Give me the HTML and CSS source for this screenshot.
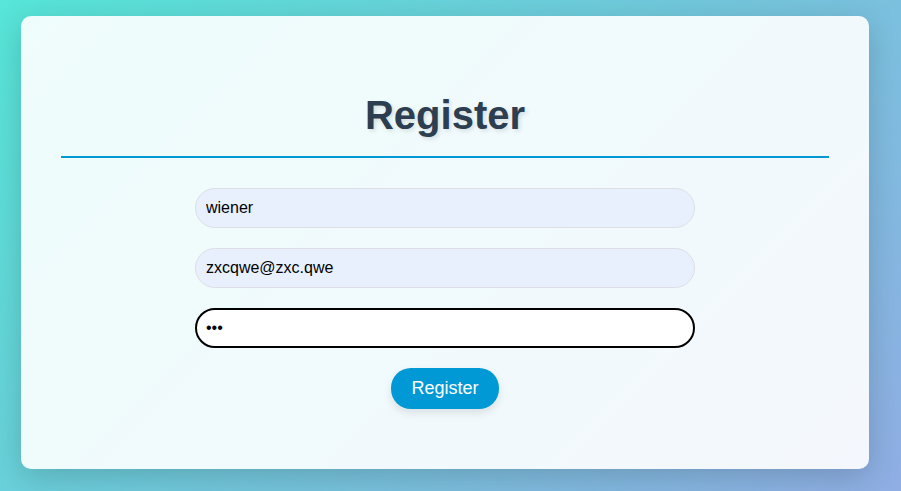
FILE: index.html
```html
<!DOCTYPE html>
<html lang="en">
<head>
<meta charset="utf-8">
<title>Register</title>
<link rel="stylesheet" href="styles.css">
</head>
<body>
  <div class="card">
    <h1 class="title">Register</h1>
    <form class="form">
      <input class="field autofill" type="text" value="wiener">
      <input class="field autofill" type="email" value="zxcqwe@zxc.qwe">
      <input class="field focused" type="password" value="abc">
      <button class="btn" type="button">Register</button>
    </form>
  </div>
</body>
</html>
```

FILE: styles.css
```css
html, body {
  margin: 0;
  padding: 0;
}
body {
  width: 901px;
  height: 491px;
  overflow: hidden;
  background: linear-gradient(135deg, #56e6d8 0%, #72c8dc 50%, #90aee4 100%);
  font-family: "Liberation Sans", Arial, sans-serif;
  padding-top: 16px;
  box-sizing: border-box;
}
.card {
  margin-left: 21px;
  width: 848px;
  box-sizing: border-box;
  padding: 76px 40px 60px;
  background: rgba(255, 255, 255, 0.9);
  border-radius: 10px;
  box-shadow: 0 8px 32px rgba(0, 0, 0, 0.18);
}
.title {
  margin: 0;
  padding-bottom: 18px;
  border-bottom: 2px solid #0099d6;
  font-size: 40px;
  font-weight: bold;
  line-height: 46px;
  text-align: center;
  color: #2c3e50;
  text-shadow: 2px 2px 4px rgba(0, 0, 0, 0.12);
}
.form {
  margin-top: 30px;
  display: flex;
  flex-direction: column;
  align-items: center;
  gap: 20px;
}
.field {
  width: 500px;
  height: 40px;
  box-sizing: border-box;
  padding: 0 10px;
  border: 1px solid #dcdfe3;
  border-radius: 20px;
  font-family: "Liberation Sans", Arial, sans-serif;
  font-size: 16px;
  color: #000;
  outline: none;
}
.autofill {
  background: #e8f0fe;
}
.focused {
  background: #fff;
  border: 2px solid #000;
  padding: 0 9px;
}
.btn {
  padding: 10px 20px;
  border: none;
  border-radius: 20px;
  background: #0099d6;
  color: #fff;
  font-family: "Liberation Sans", Arial, sans-serif;
  font-size: 18px;
  line-height: 21px;
  box-shadow: 0 4px 8px rgba(0, 0, 0, 0.1);
  cursor: pointer;
}
```
